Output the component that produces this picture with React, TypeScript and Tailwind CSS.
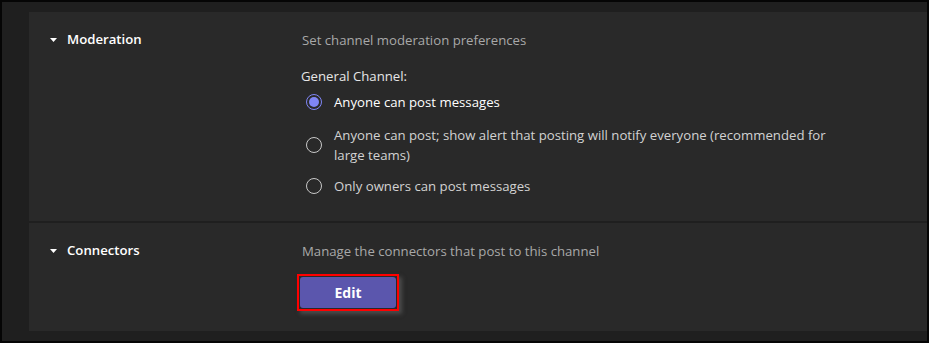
import React from "react";

type Option = { label: string; checked?: boolean };

const options: Option[] = [
  { label: "Anyone can post messages", checked: true },
  {
    label:
      "Anyone can post; show alert that posting will notify everyone (recommended for large teams)",
  },
  { label: "Only owners can post messages" },
];

const Caret = () => (
  <svg width="7" height="4" viewBox="0 0 7 4" className="shrink-0">
    <path d="M0 0h7L3.5 4z" fill="#ffffff" />
  </svg>
);

const SectionTitle = ({ title }: { title: string }) => (
  <div className="w-[273px] shrink-0 pl-[21px] flex items-center gap-[10px] h-[20px]">
    <Caret />
    <span className="text-[13.2px] font-semibold text-white">{title}</span>
  </div>
);

const Radio = ({ checked }: { checked?: boolean }) =>
  checked ? (
    <span className="w-[16px] h-[16px] rounded-full border border-[#7f85f5] flex items-center justify-center shrink-0">
      <span className="w-[10px] h-[10px] rounded-full bg-[#7f85f5]" />
    </span>
  ) : (
    <span className="w-[16px] h-[16px] rounded-full border border-[#c8c8c8] shrink-0" />
  );

export default function App() {
  return (
    <div
      className="w-[929px] h-[343px] bg-[#050505] p-[2px]"
      style={{ fontFamily: "'Open Sans', 'Noto Sans', sans-serif" }}
    >
      <div className="h-full bg-[#1f1f1f] pl-[27px] pt-[10px] pb-[10px]">
        <div className="h-full bg-[#292929] flex flex-col">
          {/* Moderation */}
          <section className="flex pt-[18px] h-[209px]">
            <SectionTitle title="Moderation" />
            <div className="flex flex-col">
              <p className="text-[13.2px] leading-[20px] text-[#a8a8a8]">
                Set channel moderation preferences
              </p>
              <p className="mt-[16px] text-[13.2px] leading-[20px] text-[#e6e6e6] -ml-[1px]">
                General Channel:
              </p>
              <div className="flex flex-col">
                {options.map((o, i) => (
                  <label
                    key={i}
                    className={`flex items-center pl-[4px] gap-[12px] ${
                      i === 0 ? "mt-[6px]" : i === 1 ? "mt-[13px]" : "mt-[11px]"
                    }`}
                  >
                    <Radio checked={o.checked} />
                    <span
                      className={`w-[505px] text-[13.2px] leading-[20px] ${
                        o.checked ? "text-white" : "text-[#d2d2d2]"
                      }`}
                    >
                      {o.label}
                    </span>
                  </label>
                ))}
              </div>
            </div>
          </section>

          <div className="h-[2px] bg-[#1f1f1f]" />

          {/* Connectors */}
          <section className="flex pt-[18px] flex-1">
            <SectionTitle title="Connectors" />
            <div className="flex flex-col">
              <p className="text-[13.2px] leading-[20px] text-[#a8a8a8]">
                Manage the connectors that post to this channel
              </p>
              <div className="mt-[13px] -ml-[5px] w-fit border-2 border-[#ff0000] p-[1px] shadow-[3px_3px_4px_rgba(90,90,90,0.7)]">
                <button className="w-[96px] h-[31px] rounded-[3px] bg-[#5b56ad] text-white text-[14px] font-bold">
                  Edit
                </button>
              </div>
            </div>
          </section>
        </div>
      </div>
    </div>
  );
}
